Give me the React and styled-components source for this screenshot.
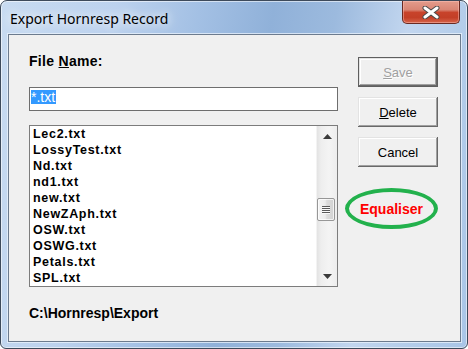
import React from "react";
import styled, { createGlobalStyle, css } from "styled-components";

const Global = createGlobalStyle`
  html, body { margin: 0; padding: 0; background: #ffffff; }
  #root { width: 468px; height: 349px; }
`;

const Window = styled.div`
  box-sizing: border-box;
  width: 468px;
  height: 349px;
  border: 1px solid #3d4a5b;
  border-radius: 7px 7px 6px 6px;
  background: linear-gradient(
    100deg,
    #c8dbf1 0%,
    #bcd2ee 22%,
    #a3c0e4 38%,
    #90b1d9 52%,
    #9cbade 64%,
    #c2d6ef 78%,
    #b4cdea 88%,
    #a9c5e7 100%
  );
  box-shadow: inset 0 0 0 1px rgba(255, 255, 255, 0.55);
  display: flex;
  flex-direction: column;
  overflow: hidden;
`;

const TitleBar = styled.div`
  flex: none;
  height: 33px;
  display: flex;
  align-items: flex-start;
  padding: 0 7px 0 8px;
`;

const Title = styled.div`
  font-family: "Noto Sans", "Open Sans", sans-serif;
  font-size: 14px;
  line-height: 20px;
  margin-top: 8px;
  margin-left: 1px;
  color: #000;
  text-shadow: 0 0 8px rgba(255, 255, 255, 0.95), 0 0 14px rgba(255, 255, 255, 0.8);
`;

const CloseButton = styled.div`
  margin-left: auto;
  box-sizing: border-box;
  width: 58px;
  height: 23px;
  border: 1px solid #6a2a22;
  border-top: none;
  border-radius: 0 0 5px 5px;
  background: linear-gradient(
    180deg,
    #e39c8c 0%,
    #d98574 40%,
    #c8432b 52%,
    #c33f27 75%,
    #d6644a 100%
  );
  box-shadow: inset 0 0 0 1px rgba(255, 200, 190, 0.45);
  display: flex;
  align-items: center;
  justify-content: center;
`;

const Client = styled.div`
  flex: 1;
  margin: 0 6px 6px 7px;
  background: #f0f0f0;
  border: 1px solid #6c7b8e;
  box-shadow: 0 0 0 1px rgba(235, 243, 252, 0.75);
  display: flex;
  gap: 20px;
  padding: 18px 0 0 20px;
`;

const LeftColumn = styled.div`
  width: 309px;
  display: flex;
  flex-direction: column;
`;

const Label = styled.div`
  font-family: "Liberation Sans", Arial, sans-serif;
  font-size: 14px;
  font-weight: bold;
  line-height: 16px;
  height: 16px;
  color: #000;
  letter-spacing: 0.3px;
`;

const TextBox = styled.div`
  box-sizing: border-box;
  margin-top: 18px;
  height: 24px;
  background: #fff;
  border: 1px solid #6e6e6e;
  padding: 2px 0 0 1px;
  display: flex;
  align-items: flex-start;
`;

const Selected = styled.span`
  background: #3399ff;
  color: #fff;
  font-family: "Liberation Sans", Arial, sans-serif;
  font-size: 14px;
  line-height: 14px;
  padding-right: 1px;
`;

const ListBox = styled.div`
  box-sizing: border-box;
  margin-top: 14px;
  height: 162px;
  background: #fff;
  border: 1px solid #7c7c7c;
  display: flex;
`;

const Items = styled.div`
  flex: 1;
  display: flex;
  flex-direction: column;
  padding-left: 3px;
  overflow: hidden;
`;

const Item = styled.div`
  height: 16px;
  line-height: 16px;
  font-family: "Liberation Sans", Arial, sans-serif;
  font-size: 12.5px;
  font-weight: bold;
  letter-spacing: 0.7px;
  color: #000;
  white-space: nowrap;
`;

const ScrollBar = styled.div`
  width: 20px;
  display: flex;
  flex-direction: column;
  background: linear-gradient(90deg, #e3e3e3 0%, #eeeeee 20%, #f4f4f4 60%, #ededed 100%);
  border-left: 1px solid #f3f3f3;
`;

const ArrowButton = styled.div`
  height: 20px;
  display: flex;
  align-items: center;
  justify-content: center;
`;

const Track = styled.div`
  flex: 1;
  position: relative;
`;

const Thumb = styled.div`
  position: absolute;
  left: 0;
  width: 18px;
  height: 23px;
  box-sizing: border-box;
  border: 1px solid #979797;
  border-radius: 2px;
  background: linear-gradient(90deg, #f4f4f4 0%, #ececec 45%, #dcdcdc 55%, #d2d2d2 100%);
  box-shadow: inset 0 0 0 1px rgba(255, 255, 255, 0.7);
  display: flex;
  flex-direction: column;
  align-items: center;
  justify-content: center;
  gap: 1px;
`;

const Grip = styled.div`
  width: 8px;
  height: 1px;
  background: #5a5a5a;
  box-shadow: 0 1px 0 #fafafa;
`;

const PathText = styled.div`
  margin-top: 18px;
  font-family: "Liberation Sans", Arial, sans-serif;
  font-size: 14px;
  font-weight: bold;
  line-height: 16px;
  color: #000;
`;

const RightColumn = styled.div`
  width: 80px;
  display: flex;
  flex-direction: column;
  align-items: flex-end;
  gap: 10px;
  padding-top: 4px;
`;

const Button = styled.div`
  box-sizing: border-box;
  width: 80px;
  height: 30px;
  background: #f0f0f0;
  display: flex;
  align-items: center;
  justify-content: center;
  font-family: "Liberation Sans", Arial, sans-serif;
  font-size: 13px;
  color: #000;
  box-shadow: inset -1px -1px 0 #696969, inset 1px 1px 0 #e3e3e3,
    inset -2px -2px 0 #a0a0a0, inset 2px 2px 0 #ffffff;
  ${(p) =>
    p.$default &&
    css`
      box-shadow: inset 0 0 0 1px #5f5f5f, inset -2px -2px 0 #696969,
        inset 2px 2px 0 #e3e3e3, inset -3px -3px 0 #a0a0a0,
        inset 3px 3px 0 #ffffff;
    `}
  ${(p) =>
    p.$disabled &&
    css`
      color: #a0a0a0;
      text-shadow: 1px 1px 0 #ffffff;
    `}
`;

const Equaliser = styled.div`
  box-sizing: border-box;
  margin-top: 11px;
  width: 93px;
  height: 41px;
  border: 4px solid #22b14c;
  border-radius: 50%;
  display: flex;
  align-items: center;
  justify-content: center;
  font-family: "Liberation Sans", Arial, sans-serif;
  font-size: 14px;
  font-weight: bold;
  color: #ff0000;
  padding-top: 1px;
`;

const files = [
  "Lec2.txt",
  "LossyTest.txt",
  "Nd.txt",
  "nd1.txt",
  "new.txt",
  "NewZAph.txt",
  "OSW.txt",
  "OSWG.txt",
  "Petals.txt",
  "SPL.txt",
];

const UpArrow = () => (
  <svg width="9" height="5" viewBox="0 0 9 5">
    <path d="M4.5 0 L9 5 L0 5 Z" fill="#3a3a3a" />
  </svg>
);

const DownArrow = () => (
  <svg width="9" height="5" viewBox="0 0 9 5">
    <path d="M0 0 L9 0 L4.5 5 Z" fill="#3a3a3a" />
  </svg>
);

export default function App() {
  const thumbTop = 52;
  return (
    <>
      <Global />
      <Window>
        <TitleBar>
          <Title>Export Hornresp Record</Title>
          <CloseButton>
            <svg width="20" height="13" viewBox="0 0 20 13">
              <path d="M4 2 L16 11 M16 2 L4 11" stroke="#4a4a4a" strokeWidth="5" strokeLinecap="round" />
              <path d="M4 2 L16 11 M16 2 L4 11" stroke="#ffffff" strokeWidth="3" strokeLinecap="round" />
            </svg>
          </CloseButton>
        </TitleBar>
        <Client>
          <LeftColumn>
            <Label>
              File <u>N</u>ame:
            </Label>
            <TextBox>
              <Selected>*.txt</Selected>
            </TextBox>
            <ListBox>
              <Items>
                {files.map((f) => (
                  <Item key={f}>{f}</Item>
                ))}
              </Items>
              <ScrollBar>
                <ArrowButton>
                  <UpArrow />
                </ArrowButton>
                <Track>
                  <Thumb style={{ top: thumbTop }}>
                    <Grip />
                    <Grip />
                    <Grip />
                    <Grip />
                  </Thumb>
                </Track>
                <ArrowButton>
                  <DownArrow />
                </ArrowButton>
              </ScrollBar>
            </ListBox>
            <PathText>C:\Hornresp\Export</PathText>
          </LeftColumn>
          <RightColumn>
            <Button $default $disabled>
              <span>
                <u>S</u>ave
              </span>
            </Button>
            <Button>
              <span>
                <u>D</u>elete
              </span>
            </Button>
            <Button>Cancel</Button>
            <Equaliser>Equaliser</Equaliser>
          </RightColumn>
        </Client>
      </Window>
    </>
  );
}
